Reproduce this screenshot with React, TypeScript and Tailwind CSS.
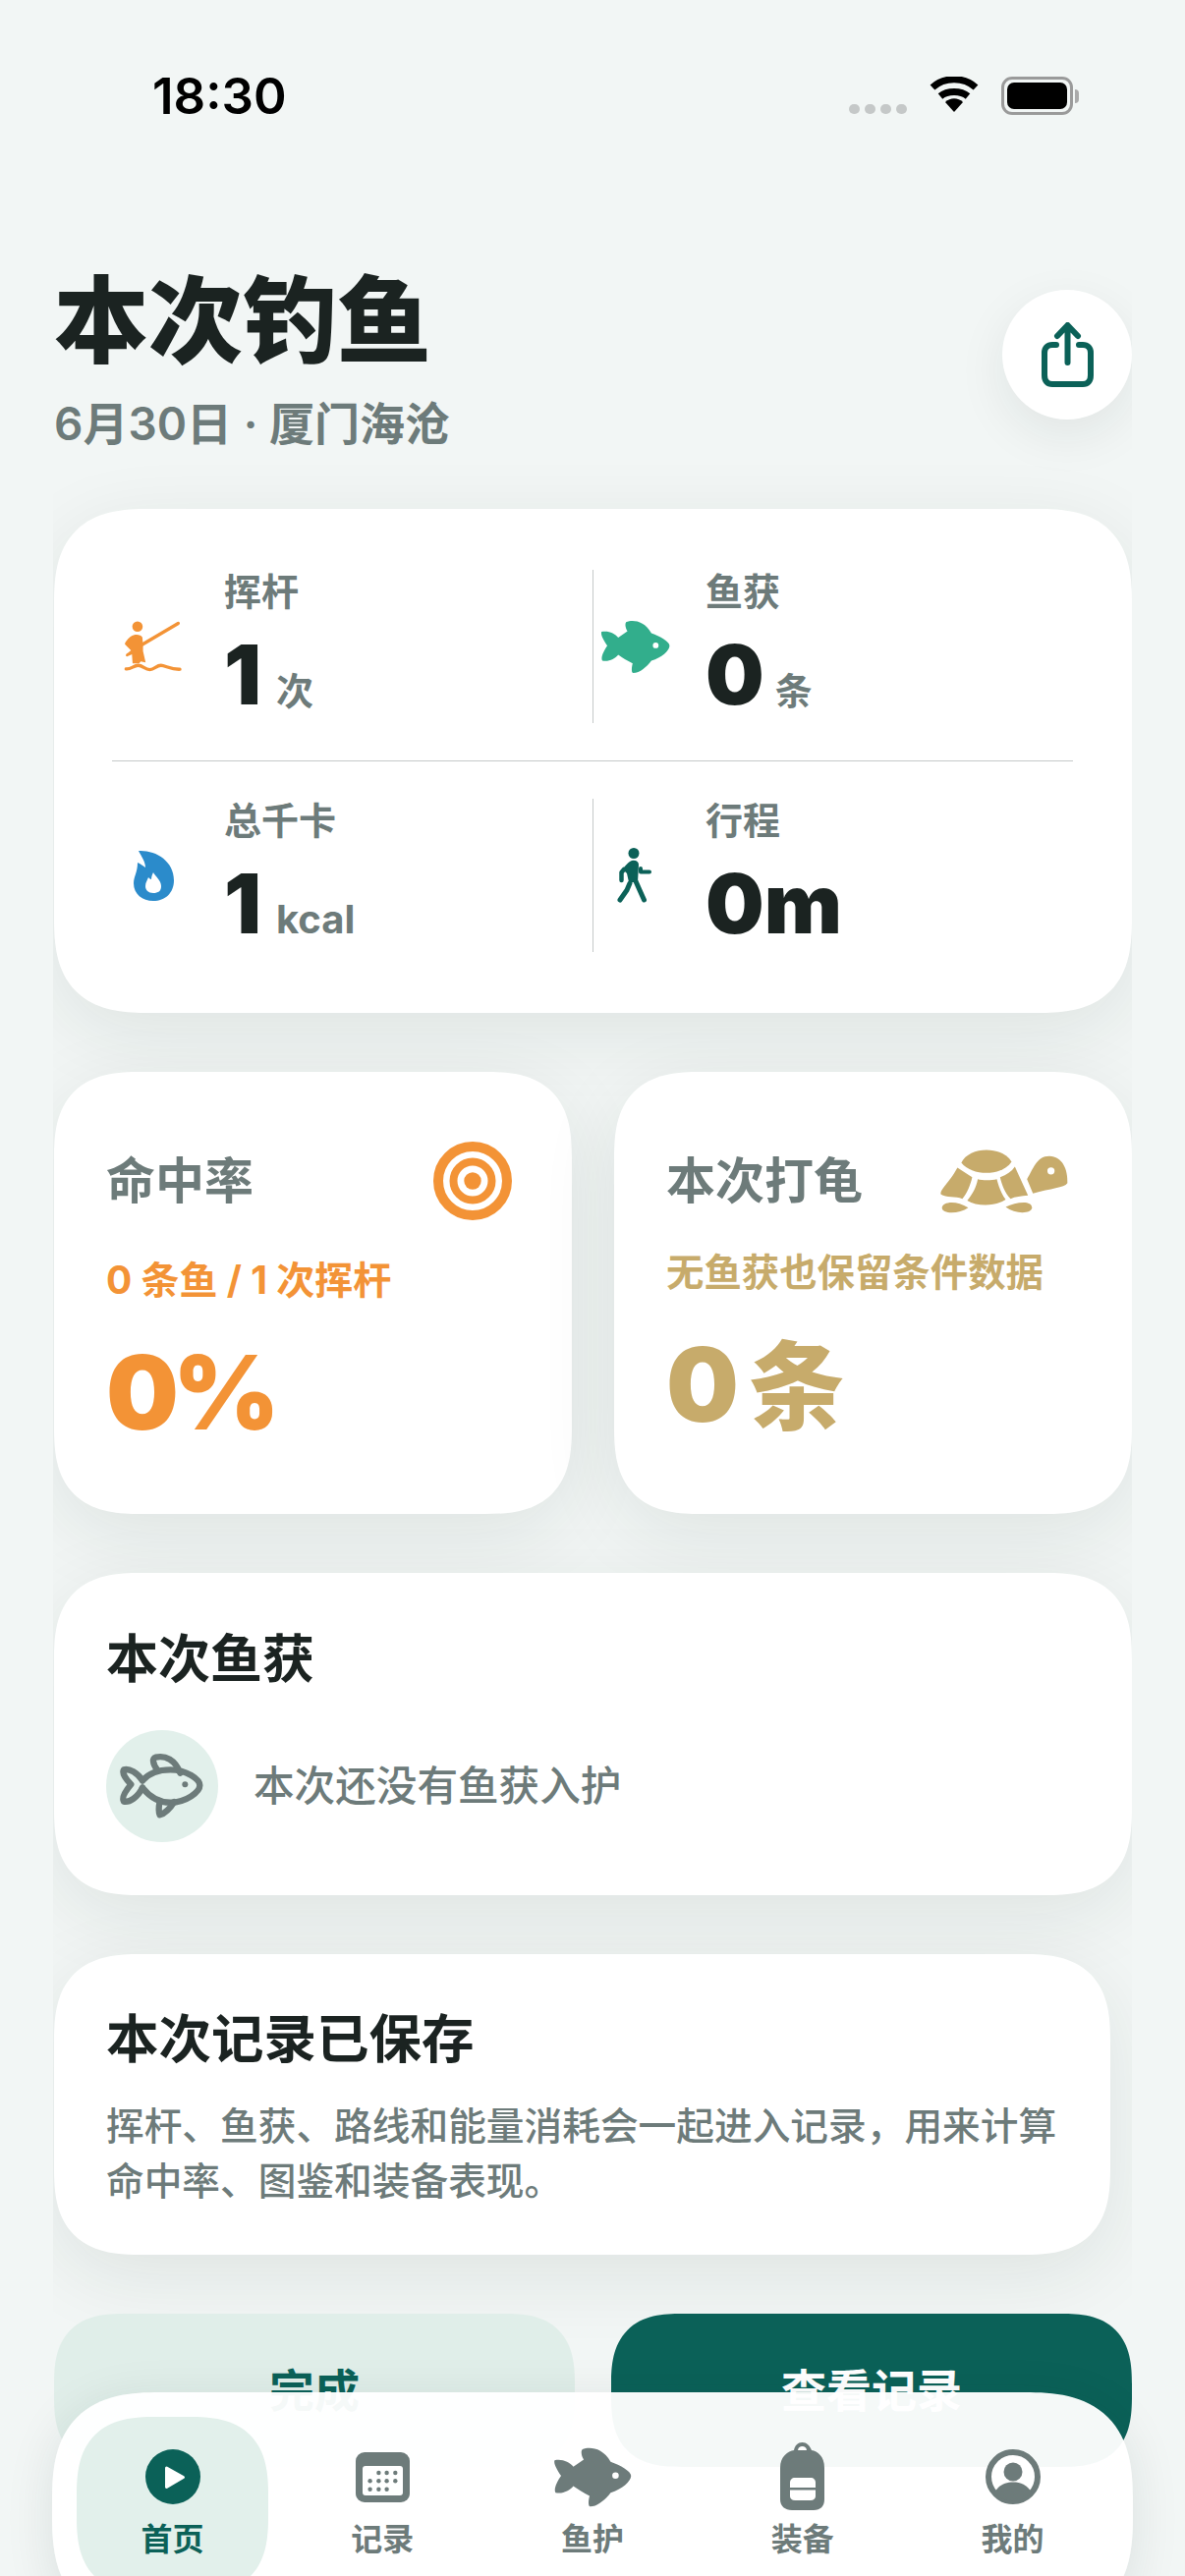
import type { ReactNode } from "react";

const FISH_PATH =
  "M2 40C25 35 48 45 60 60L92 38C85 28 82 12 88 6C110-2 150 0 175 45C205 55 238 75 238 88C238 105 210 130 175 140C160 160 135 183 112 183C105 183 106 165 110 150C90 140 75 130 60 120C48 135 25 145 5 140C-2 130 10 105 22 88C10 70-2 50 2 40Z";

function FishIcon({ className }: { className: string }) {
  return (
    <svg viewBox="-2 0 242 185" className={className} fill="currentColor">
      <path d={FISH_PATH} />
      <circle cx="190" cy="87" r="10" fill="#fff" />
    </svg>
  );
}

function FisherIcon() {
  return (
    <svg viewBox="75 95 190 165" className="h-[55px] w-[63px] text-[#f39336]" fill="currentColor">
      <circle cx="120" cy="115" r="16" />
      <path d="M100 145C110 138 130 138 135 148L137 170V190L145 225L130 222L125 228H105L103 200L88 207C82 205 84 198 90 196L100 188L82 170C78 165 95 148 100 145Z" />
      <path d="M135 170L245 105" stroke="currentColor" strokeWidth="10" strokeLinecap="round" fill="none" />
      <path d="M85 245C100 247 108 234 122 234C137 234 142 247 158 247C172 247 178 234 192 234C205 234 222 247 250 246" stroke="currentColor" strokeWidth="10" strokeLinecap="round" fill="none" />
    </svg>
  );
}

function FlameIcon() {
  return (
    <svg viewBox="0 0 41 54" className="h-[54px] w-[41px]">
      <path fill="#2b8bcb" d="M5 2C22 1 41 12 41 32C41 45 32 53 20 53C9 53 0 46 0 35C0 28 4 24 4 14C7 15 9 17 12 19C12 13 8 8 5 2Z" />
      <path fill="#fff" d="M20 24C22 28 28 32 28 38C28 43 25 45 20 45C15 45 12 42 12 38C12 34 14 32 15 29C16 30 17 31 18 31C18 28 19 26 20 24Z" />
    </svg>
  );
}

function WalkIcon() {
  return (
    <svg viewBox="0 0 36 56" className="h-[56px] w-[36px] text-[#0b6158]" fill="currentColor">
      <circle cx="17" cy="5.5" r="5.5" />
      <path d="M15 13C19 12 22 14 22 17L21 35H12L10 26L6 22C8 18 12 14 15 13Z" />
      <g stroke="currentColor" fill="none" strokeLinecap="round" strokeLinejoin="round">
        <path d="M19 34L23 43L27.5 53" strokeWidth="5" />
        <path d="M13 36L10 43L3 53" strokeWidth="5" />
        <path d="M7 22L4.5 25V33" strokeWidth="4.500" />
        <path d="M24 21V24.500H33" strokeWidth="4" />
      </g>
    </svg>
  );
}

function TargetIcon() {
  return (
    <svg viewBox="0 0 80 80" className="h-20 w-20 text-[#f39336]" fill="none" stroke="currentColor">
      <circle cx="40" cy="40" r="35" strokeWidth="10" />
      <circle cx="40" cy="40" r="19.5" strokeWidth="8" />
      <circle cx="40" cy="40" r="8.7" fill="currentColor" stroke="none" />
    </svg>
  );
}

function TurtleIcon() {
  return (
    <svg viewBox="80 85 395 200" className="h-[67px] w-[132px] text-[#c7ab6b]" fill="currentColor">
      <path d="M147 128C170 78 270 75 300 125C270 170 180 170 147 128Z" />
      <path d="M135 143L180 172C175 195 165 220 150 238C130 230 100 235 85 225C80 210 110 190 135 143Z" />
      <path d="M197 178C210 182 240 182 255 178C262 205 270 225 282 240C250 262 195 262 165 243C180 225 192 205 197 178Z" />
      <path d="M310 140L350 228C330 230 310 232 297 238C280 220 270 195 265 172C285 165 300 155 310 140Z" />
      <path fillRule="evenodd" d="M347 178C365 150 375 108 415 108C455 108 472 150 470 190C460 205 420 205 365 222ZM420 142A11 11 0 1 0 420 164A11 11 0 1 0 420 142Z" />
      <path d="M88 265C88 248 130 240 168 265C140 285 88 285 88 265Z" />
      <path d="M282 263C310 250 360 240 362 265C360 285 310 285 282 263Z" />
    </svg>
  );
}

function FishOutline() {
  return (
    <svg viewBox="90 140 270 210" className="h-[70px] w-[90px] text-[#6d7b7a]" fill="none" stroke="currentColor" strokeWidth="19" strokeLinecap="round" strokeLinejoin="round">
      <path d="M165 228C150 205 125 190 108 195C102 205 115 225 130 240C115 258 100 280 108 292C125 296 150 280 165 250" />
      <path d="M165 228C185 205 215 195 250 195C300 195 340 225 340 243C340 262 300 295 250 295C215 295 185 275 165 250" />
      <path d="M210 195C195 175 195 160 205 157C235 150 265 165 280 205" />
      <path d="M262 293C250 312 235 328 218 333C212 320 215 305 218 290" />
      <circle cx="295" cy="240" r="9" fill="currentColor" stroke="none" />
    </svg>
  );
}

function PlayIcon() {
  return (
    <svg viewBox="0 0 56 56" className="h-14 w-14">
      <circle cx="28" cy="28" r="28" fill="#0b6158" />
      <path d="M21.5 19L38.5 28.5L21.5 38.5Z" fill="#fff" stroke="#fff" strokeWidth="3" strokeLinejoin="round" />
    </svg>
  );
}

function CalendarIcon() {
  const dots = [
    [23.4, 21], [31.6, 21], [40.3, 21],
    [14.6, 29.3], [23.4, 29.3], [31.6, 29.3], [40.3, 29.3],
    [14.6, 37.7], [23.4, 37.7], [31.6, 37.7],
  ];
  return (
    <svg viewBox="0 0 55 51" className="h-[51px] w-[55px]">
      <rect width="55" height="51" rx="9" fill="#6d7b7a" />
      <rect x="7" y="14" width="41" height="30" rx="3" fill="#fff" />
      {dots.map(([cx, cy], i) => (
        <circle key={i} cx={cx} cy={cy} r="2.2" fill="#6d7b7a" />
      ))}
    </svg>
  );
}

function BackpackIcon() {
  return (
    <svg viewBox="0 0 46 70" className="h-[70px] w-[46px]">
      <path fill="#6d7b7a" d="M14 8C8 9 0 14 0 26V58C0 65 5 69 12 69H34C41 69 45 65 45 58V26C45 14 38 9 32 8C30 3 27 0 22.5 0C18 0 15 3 14 8Z" />
      <path fill="#fff" d="M18 8C18.5 5 20 4 22.5 4C25 4 26.5 5 27 8Z" />
      <path fill="#fff" d="M10 46V41C10 38 12 36 15 36H31C34 36 36 38 36 41V46Z" />
      <path fill="#fff" d="M10 48.500H36V55C36 57 34 59 31 59H15C12 59 10 57 10 55Z" />
    </svg>
  );
}

function ProfileIcon() {
  return (
    <svg viewBox="0 0 56 56" className="h-14 w-14">
      <circle cx="28" cy="28" r="25" fill="#fff" stroke="#6d7b7a" strokeWidth="6" />
      <circle cx="28" cy="23" r="9.500" fill="#6d7b7a" />
      <path fill="#6d7b7a" d="M9 44C14 36 20 33.500 28 33.500C36 33.500 42 36 47 44C42 50 35 53 28 53C21 53 14 50 9 44Z" />
    </svg>
  );
}

const STATS: { label: string; value: string; unit?: string; unitClass?: string; icon: ReactNode }[][] = [
  [
    { label: "挥杆", value: "1", unit: "次", unitClass: "ml-[15px] text-[38px]", icon: <FisherIcon /> },
    { label: "鱼获", value: "0", unit: "条", unitClass: "ml-[11px] text-[38px]", icon: <FishIcon className="h-[55px] w-[71px] text-[#32ae8c]" /> },
  ],
  [
    { label: "总千卡", value: "1", unit: "kcal", unitClass: "ml-[15px] text-[40px]", icon: <FlameIcon /> },
    { label: "行程", value: "0m", icon: <WalkIcon /> },
  ],
];

const TABS: { label: string; icon: ReactNode; active?: boolean }[] = [
  { label: "首页", icon: <PlayIcon />, active: true },
  { label: "记录", icon: <CalendarIcon /> },
  { label: "鱼护", icon: <FishIcon className="h-[61px] w-[80px] text-[#6d7b7a]" /> },
  { label: "装备", icon: <BackpackIcon /> },
  { label: "我的", icon: <ProfileIcon /> },
];

const CARD = "bg-white shadow-[0_20px_80px_rgba(20,40,35,0.09)] [corner-shape:superellipse(1.4)]";

function StatCell({ stat, divided }: { stat: (typeof STATS)[number][number]; divided?: boolean }) {
  return (
    <div className={`flex h-[156px] items-center ${divided ? "border-l border-[#c5c9c9]" : ""}`}>
      <div className="flex w-[84px] shrink-0 justify-center">{stat.icon}</div>
      <div className="ml-[30px] self-start">
        <p className="text-[38px] leading-[44px] font-semibold text-[#6d7b7a]">{stat.label}</p>
        <p className="mt-[19px] flex items-baseline text-[84px] leading-[88px] font-black text-[#1b2321]">
          {stat.value}
          {stat.unit && <span className={`leading-none font-bold text-[#6d7b7a] ${stat.unitClass}`}>{stat.unit}</span>}
        </p>
      </div>
    </div>
  );
}

export default function App() {
  return (
    <div className="relative flex h-[2622px] flex-col overflow-hidden bg-[#f2f6f5] font-[Inter,'Noto_Sans_CJK_SC',sans-serif]">
      {/* Status bar */}
      <div className="flex h-[250px] shrink-0 items-start justify-between pt-[68px] pr-[108px] pl-[155px]">
        <span className="text-[51px] leading-[60px] font-semibold text-black">18:30</span>
        <div className="flex items-start pt-[10px]">
          <div className="mt-[28px] flex gap-[5px]">
            {[0, 1, 2, 3].map((i) => (
              <span key={i} className="h-[10px] w-[11px] rounded-full bg-[#c5c8c8]" />
            ))}
          </div>
          <svg viewBox="0 0 50 36" className="ml-[23px] h-9 w-[50px]">
            <path d="M3 11C15 0 35 0 47 11" stroke="#000" strokeWidth="7" fill="none" />
            <path d="M11 20C18 14 32 14 39 20" stroke="#000" strokeWidth="7" fill="none" />
            <path d="M25 36L16 26C21 21 29 21 34 26Z" />
          </svg>
          <div className="ml-[23px] flex items-center">
            <div className="h-[39px] w-[73px] rounded-[11px] border-[3px] border-[#9a9a9a] p-[3px]">
              <div className="h-full w-full rounded-[7px] bg-black" />
            </div>
            <div className="ml-0.5 h-[14px] w-1 rounded-r-full bg-[#aaaaaa]" />
          </div>
        </div>
      </div>

      <main className="ml-[54px] w-[1098px] flex-1 overflow-hidden pl-px">
        {/* Header */}
        <header className="flex h-[268px] items-start justify-between pt-5">
          <div>
            <h1 className="text-[96px] leading-[112px] font-black text-[#1b2321]">本次钓鱼</h1>
            <p className="mt-[19px] text-[46px] leading-[60px] font-semibold text-[#6d7b7a]">6月30日 · 厦门海沧</p>
          </div>
          <button className="mt-[25px] flex h-[132px] w-[132px] items-center justify-center rounded-full bg-white shadow-[0_16px_50px_rgba(20,40,35,0.08)]">
            <svg viewBox="0 0 53 66" className="h-[66px] w-[53px]" fill="none" stroke="#0b6158" strokeWidth="6" strokeLinecap="round" strokeLinejoin="round">
              <path d="M15 23H11C6 23 3 26 3 31V54C3 60 6 63 11 63H42C47 63 50 60 50 54V31C50 26 47 23 42 23H38" />
              <path d="M26.500 41V4M16 14L26.500 3L37 14" />
            </svg>
          </button>
        </header>

        <div className="flex flex-col gap-[60px]">
          {/* Stats */}
          <section className={`rounded-[96px] py-[62px] pr-[60px] pl-[59px] ${CARD}`}>
            {STATS.map((row, r) => (
              <div key={r}>
                {r > 0 && <div className="my-[38px] h-px bg-[#c5c9c9]" />}
                <div className="grid grid-cols-[489px_1fr]">
                  {row.map((stat, i) => (
                    <StatCell key={stat.label} stat={stat} divided={i === 1} />
                  ))}
                </div>
              </div>
            ))}
          </section>

          {/* Hit rate and turtle */}
          <div className="grid grid-cols-2 gap-[43px]">
            <section className={`h-[450px] rounded-[88px] px-[53px] pt-[71px] ${CARD}`}>
              <div className="flex h-20 items-center justify-between pr-2">
                <h2 className="text-[50px] font-bold text-[#6d7b7a]">命中率</h2>
                <TargetIcon />
              </div>
              <p className="mt-[36px] text-[39px] leading-[50px] font-bold text-[#f39336]">0 条鱼 / 1 次挥杆</p>
              <p className="mt-[34px] text-[104px] leading-[110px] font-black tracking-[-6px] text-[#f39336]">0%</p>
            </section>
            <section className={`h-[450px] rounded-[88px] px-[53px] pt-[71px] ${CARD}`}>
              <div className="flex h-20 items-center justify-between pr-[11px]">
                <h2 className="text-[50px] font-bold text-[#6d7b7a]">本次打龟</h2>
                <TurtleIcon />
              </div>
              <p className="mt-[28px] text-[38.400px] leading-[50px] font-bold whitespace-nowrap text-[#c7ab6b]">无鱼获也保留条件数据</p>
              <p className="mt-[34px] flex items-baseline text-[104px] leading-[110px] font-black text-[#c7ab6b]">
                0<span className="ml-[10px] text-[98px] leading-none">条</span>
              </p>
            </section>
          </div>

          {/* Catch */}
          <section className={`h-[328px] rounded-[88px] px-[53px] pt-[58px] ${CARD}`}>
            <h2 className="text-[53px] leading-[60px] font-bold text-[#1b2321]">本次鱼获</h2>
            <div className="mt-[42px] flex items-center gap-9">
              <div className="flex h-[114px] w-[114px] items-center justify-center rounded-full bg-[#e2f0eb]">
                <FishOutline />
              </div>
              <p className="text-[41.600px] font-medium text-[#6d7b7a]">本次还没有鱼获入护</p>
            </div>
          </section>

          {/* Saved note */}
          <section className={`h-[306px] w-[1075px] rounded-[88px] px-[53px] pt-[57px] ${CARD}`}>
            <h2 className="text-[53.500px] leading-[60px] font-bold text-[#1b2321]">本次记录已保存</h2>
            <p className="mt-[30px] text-[38.700px] leading-[56px] font-medium text-[#6d7b7a]">
              挥杆、鱼获、路线和能量消耗会一起进入记录，用来计算命中率、图鉴和装备表现。
            </p>
          </section>

          <div className="flex gap-[37px]">
            <button className="h-[156px] flex-1 rounded-[72px] bg-[#e0eee9] text-[46px] font-bold text-[#0b6158] [corner-shape:superellipse(1.4)]">完成</button>
            <button className="h-[156px] flex-1 rounded-[72px] bg-[#0b6158] text-[46px] font-bold text-white [corner-shape:superellipse(1.4)]">查看记录</button>
          </div>
        </div>
      </main>

      {/* Tab bar, floats over the page and runs off the bottom */}
      <nav className="absolute top-[2435px] right-[53px] left-[53px] grid h-[236px] grid-cols-5 gap-[18.750px] rounded-[110px] bg-white/96 px-[25px] pt-[25px] shadow-[0_10px_50px_rgba(20,40,35,0.1)] [corner-shape:superellipse(1.4)]">
        {TABS.map((tab) => (
          <div key={tab.label} className={`flex h-[181px] flex-col items-center rounded-[80px] pt-[26px] [corner-shape:superellipse(1.4)] ${tab.active ? "bg-[#e2f0eb]" : ""}`}>
            <div className="flex h-[70px] items-center justify-center">{tab.icon}</div>
            <span className={`mt-[9px] text-[32px] leading-10 font-bold ${tab.active ? "text-[#0b6158]" : "text-[#6d7b7a]"}`}>{tab.label}</span>
          </div>
        ))}
      </nav>
    </div>
  );
}
